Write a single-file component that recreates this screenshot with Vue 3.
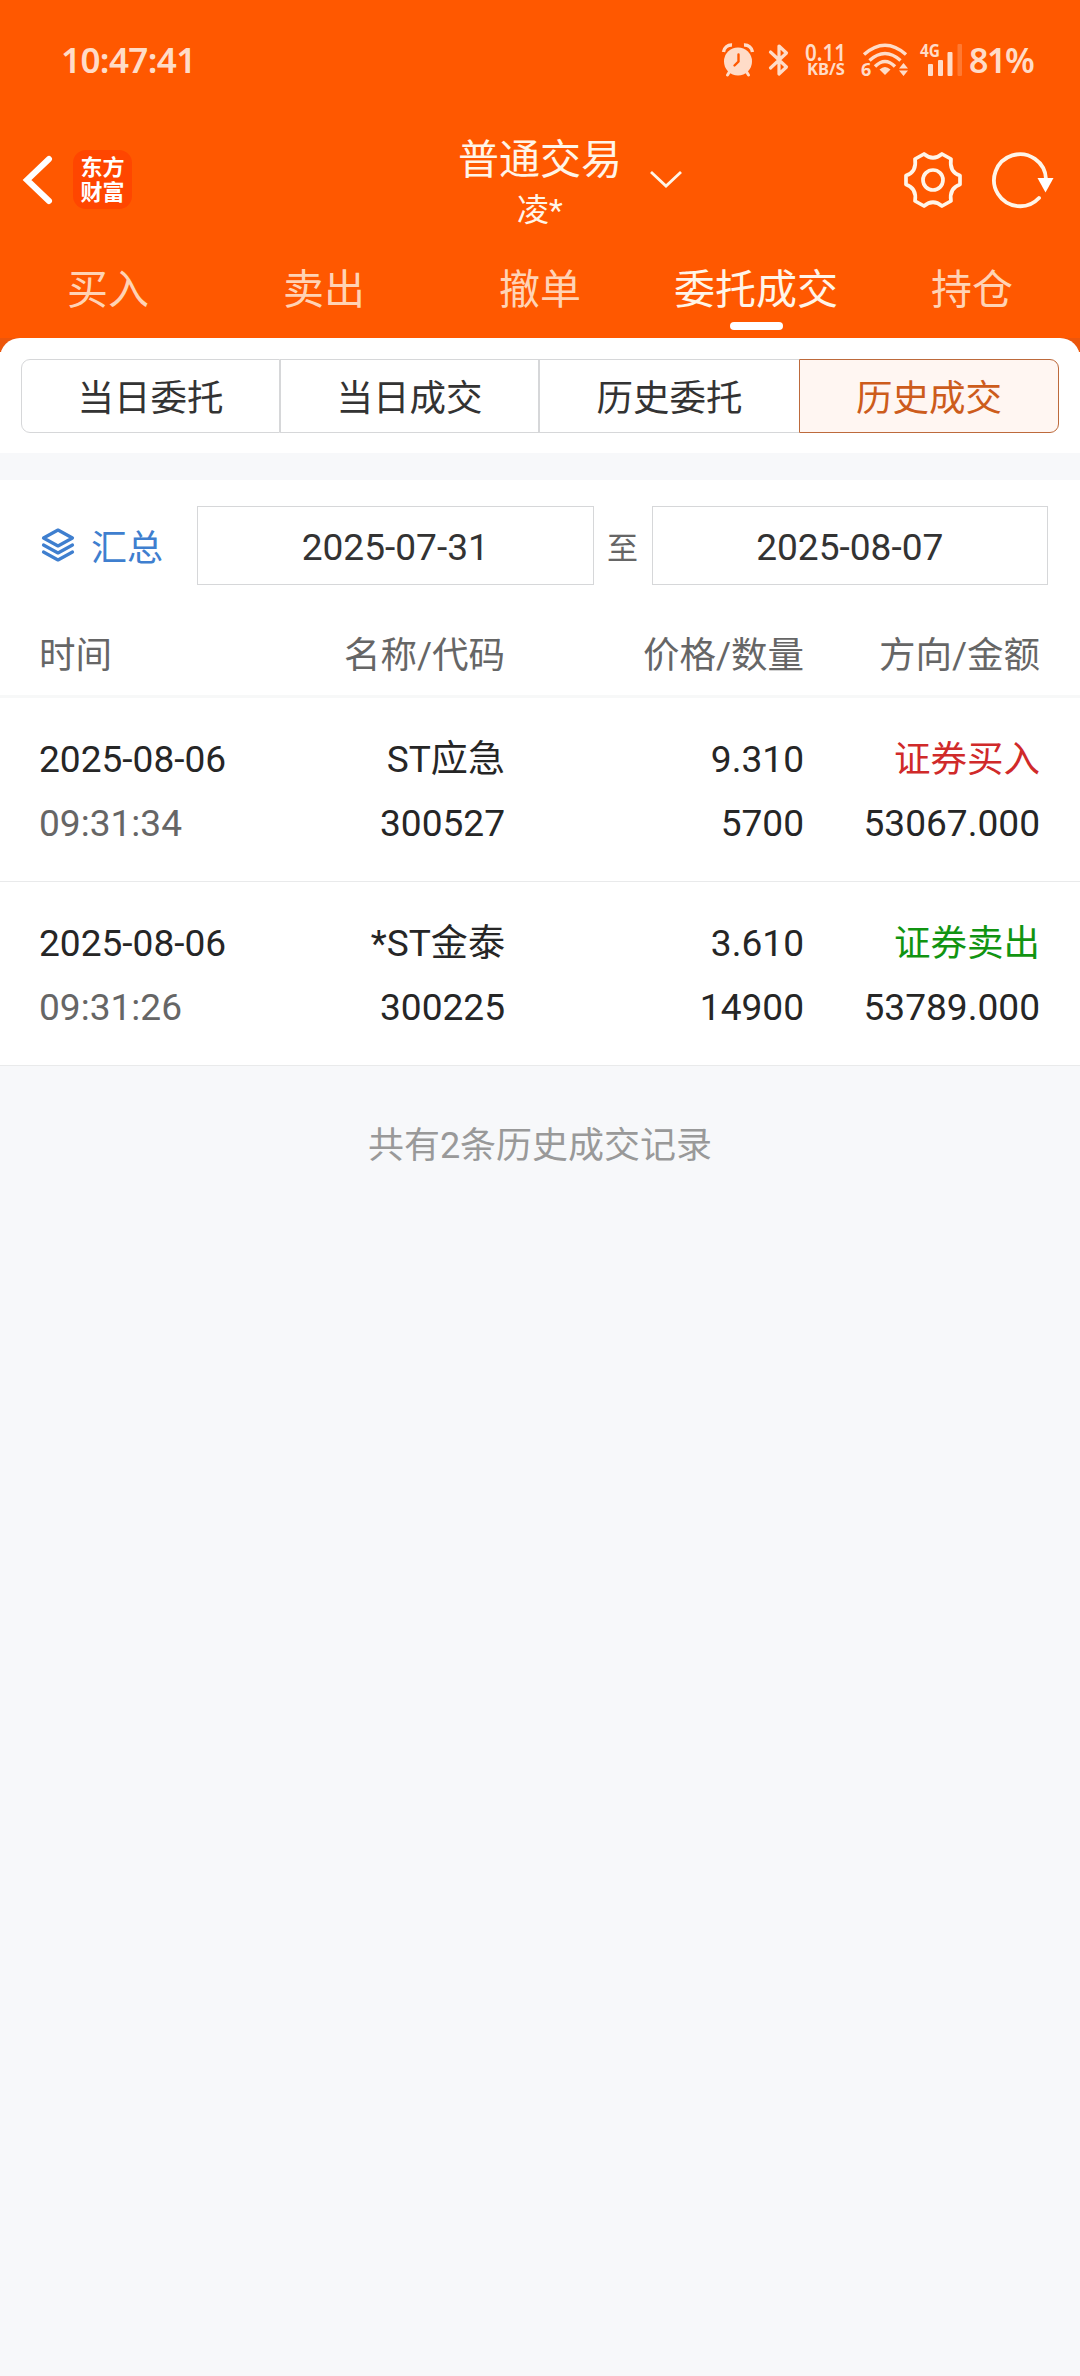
<script setup>
const tabs = ['买入', '卖出', '撤单', '委托成交', '持仓']
const activeTab = '委托成交'
const segments = ['当日委托', '当日成交', '历史委托', '历史成交']
const activeSegment = '历史成交'
const records = [
  { date: '2025-08-06', time: '09:31:34', name: 'ST应急', code: '300527', price: '9.310', qty: '5700', side: '证券买入', type: 'buy', amount: '53067.000' },
  { date: '2025-08-06', time: '09:31:26', name: '*ST金泰', code: '300225', price: '3.610', qty: '14900', side: '证券卖出', type: 'sell', amount: '53789.000' }
]
</script>

<template>
  <div class="screen">
    <header class="header">
      <div class="status">
        <span class="clock">10:47:41</span>
        <div class="status-icons">
          <svg class="alarm" width="32" height="34" viewBox="0 0 32 34">
            <path d="M1.500 9A8 8 0 0 1 10 2M30.500 9A8 8 0 0 0 22 2" fill="none" stroke="currentColor" stroke-width="3.400" />
            <path d="M8 28L5.500 32M24 28L26.500 32" stroke="currentColor" stroke-width="3" stroke-linecap="round" />
            <circle cx="16" cy="18.500" r="14" fill="currentColor" />
            <path d="M16.500 11.500V18.500L12.500 22.500" fill="none" stroke="#ff5800" stroke-width="2.400" stroke-linecap="round" />
          </svg>
          <svg class="bluetooth" width="22" height="34" viewBox="0 0 22 34">
            <path d="M2.500 9L18.500 24L11 31V3L18.500 10L2.500 25" fill="none" stroke="currentColor" stroke-width="3.200" stroke-linejoin="round" stroke-linecap="round" />
          </svg>
          <svg class="speed" width="41" height="34" viewBox="0 0 41 34" fill="currentColor">
            <text x="0" y="17.500" font-size="24" font-weight="600" textLength="41" lengthAdjust="spacingAndGlyphs">0.11</text>
            <text x="2" y="32" font-size="16" font-weight="700" textLength="38" lengthAdjust="spacingAndGlyphs">KB/S</text>
          </svg>
          <svg class="wifi" width="48" height="34" viewBox="0 0 48 34">
            <g fill="none" stroke="currentColor" stroke-width="3.400">
              <path d="M3 11.500Q24 -7 45 11.500" />
              <path d="M8.500 17.500Q24 3.500 39.500 17.500" />
              <path d="M14 23.500Q24 13.500 34 23.500" />
            </g>
            <path d="M18.500 26.500Q24 21.500 29.500 26.500L24 32Z" fill="currentColor" />
            <path d="M38 25.500L42.500 20L47 25.500ZM38 27.500H47L42.500 33Z" fill="currentColor" />
            <text x="0" y="32.500" font-size="18" font-weight="700" fill="currentColor">6</text>
          </svg>
          <svg class="signal" width="44" height="34" viewBox="0 0 44 34">
            <text x="0" y="14" font-size="18" font-weight="700" textLength="20" lengthAdjust="spacingAndGlyphs" fill="currentColor">4G</text>
            <g fill="currentColor">
              <rect x="8" y="21" width="5" height="12" rx="1" />
              <rect x="18" y="17" width="5" height="16" rx="1" />
              <rect x="27.500" y="9" width="5" height="24" rx="1" />
              <rect x="37.500" y="1" width="4.500" height="32" rx="1" opacity=".25" />
            </g>
          </svg>
          <span class="battery">81%</span>
        </div>
      </div>

      <div class="nav">
        <div class="nav-left">
          <svg width="32" height="52" viewBox="0 0 32 52">
            <path d="M28 5L6 26L28 47" fill="none" stroke="#fff" stroke-width="6" stroke-linecap="round" stroke-linejoin="miter" />
          </svg>
          <div class="logo"><span>东方</span><span>财富</span></div>
        </div>
        <div class="title">
          <div class="account">普通交易</div>
          <div class="holder">凌*</div>
        </div>
        <svg class="chevron" width="34" height="20" viewBox="0 0 34 20">
          <path d="M2 2L17 16L32 2" fill="none" stroke="#fff5e8" stroke-width="2.800" />
        </svg>
        <div class="nav-right">
          <svg width="60" height="60" viewBox="-30 -30 60 60" fill="none" stroke="#fff5e8" stroke-width="3.700" stroke-linejoin="round">
            <path d="M-9 -26Q0 -18.500 9 -26L18 -21Q16 -8 27 -4.500V4.500Q16 8 18 21L9 26Q0 18.500 -9 26L-18 21Q-16 8 -27 4.500V-4.500Q-16 -8 -18 -21Z" />
            <circle r="10" />
          </svg>
          <svg width="64" height="60" viewBox="-30 -30 64 60">
            <path d="M19 18A26 26 0 1 1 26 -1" fill="none" stroke="#fff5e8" stroke-width="3.800" stroke-linecap="round" />
            <path d="M17.500 -2H33.500L25.500 12.500Z" fill="#fff" />
          </svg>
        </div>
      </div>

      <nav class="tabs">
        <div v-for="t in tabs" :key="t" class="tab" :class="{ active: t === activeTab }">{{ t }}</div>
      </nav>
    </header>

    <div class="panel-wrap">
      <div class="panel">
        <div class="segments">
          <div v-for="s in segments" :key="s" class="segment" :class="{ active: s === activeSegment }">{{ s }}</div>
        </div>
      </div>
    </div>

    <section class="list">
      <div class="filter">
        <div class="summary">
          <svg width="34" height="34" viewBox="0 0 34 34" fill="none" stroke="#3f7fcf" stroke-width="3.200" stroke-linejoin="round" stroke-linecap="round">
            <path d="M17 2L31.500 10L17 18L2.500 10Z" />
            <path d="M2.500 17L17 25L31.500 17" />
            <path d="M2.500 24L17 32L31.500 24" />
          </svg>
          <span>汇总</span>
        </div>
        <div class="date">2025-07-31</div>
        <span class="to">至</span>
        <div class="date">2025-08-07</div>
      </div>

      <div class="grid head">
        <span>时间</span><span>名称/代码</span><span>价格/数量</span><span>方向/金额</span>
      </div>

      <div v-for="r in records" :key="r.code" class="grid row">
        <div><p>{{ r.date }}</p><p class="time">{{ r.time }}</p></div>
        <div><p>{{ r.name }}</p><p>{{ r.code }}</p></div>
        <div><p>{{ r.price }}</p><p>{{ r.qty }}</p></div>
        <div><p :class="r.type">{{ r.side }}</p><p>{{ r.amount }}</p></div>
      </div>
    </section>

    <footer class="count">共有2条历史成交记录</footer>
  </div>
</template>

<style>
body {
  margin: 0;
  background: #f7f8fa;
}
</style>

<style scoped>
.screen {
  width: 1080px;
  height: 2376px;
  overflow: hidden;
  background: #f7f8fa;
  font-family: Roboto, "Noto Sans CJK SC", sans-serif;
  font-size: 36.5px;
  color: #262626;
}
.header {
  height: 338px;
  background: #ff5800;
}
.status {
  height: 119px;
  box-sizing: border-box;
  padding: 0 46px 0 61px;
  display: flex;
  align-items: center;
  justify-content: space-between;
  color: #ffdcc8;
  font-family: "Noto Sans", sans-serif;
}
.clock {
  font-size: 35px;
  font-weight: 600;
  letter-spacing: -.6px;
}
.status-icons {
  display: flex;
  align-items: center;
}
.status-icons svg {
  display: block;
  overflow: visible;
}
.bluetooth {
  margin-left: 14px;
}
.speed,
.wifi {
  margin-left: 15px;
}
.signal {
  margin-left: 11px;
}
.battery {
  width: 65px;
  margin-left: 5px;
  font-size: 34px;
  font-weight: 600;
  letter-spacing: -1.4px;
  white-space: nowrap;
}
.nav {
  height: 121px;
  display: grid;
  grid-template-columns: 458px 164px 1fr auto;
  align-items: center;
}
.nav svg {
  display: block;
}
.nav-left {
  display: flex;
  align-items: center;
  padding-left: 21px;
  gap: 20px;
}
.logo {
  width: 59px;
  height: 59px;
  border-radius: 13px;
  background: #ff4600;
  display: flex;
  flex-direction: column;
  align-items: center;
  justify-content: center;
  color: #fff;
  font-size: 22px;
  line-height: 25px;
  font-weight: 700;
}
.title {
  text-align: center;
  color: #fff5e8;
  padding-top: 4px;
}
.account {
  font-size: 41px;
  line-height: 56px;
  white-space: nowrap;
}
.holder {
  font-size: 32px;
  line-height: 44px;
}
.chevron {
  margin-left: 27px;
}
.nav-right {
  display: flex;
  gap: 27px;
  padding-right: 26px;
}
.tabs {
  height: 98px;
  display: grid;
  grid-template-columns: repeat(5, 1fr);
}
.tab {
  display: flex;
  flex-direction: column;
  align-items: center;
  font-size: 41px;
  line-height: 60px;
  padding-top: 20px;
  color: #ffd3b5;
}
.tab.active {
  color: #fff5e8;
}
.tab.active::after {
  content: "";
  width: 53px;
  height: 8px;
  border-radius: 4px;
  background: #fff;
  margin-top: 2px;
}
.panel-wrap {
  background: linear-gradient(#ec560b 14px, #fff 14px);
}
.panel {
  height: 115px;
  box-sizing: border-box;
  padding: 21px 21px 0;
  background: #fff;
  border-radius: 20px 20px 0 0;
}
.segments {
  display: grid;
  grid-template-columns: 259px 259px 260px 260px;
  height: 74px;
}
.segment {
  display: flex;
  align-items: center;
  justify-content: center;
  padding-bottom: 2px;
  border: 1px solid #d6d7d9;
  color: #333;
  background: #fff;
}
.segment:first-child {
  border-radius: 9px 0 0 9px;
}
.segment:nth-child(3) {
  border-right: 0;
}
.segment.active {
  border-color: #bd6a3c;
  border-radius: 0 9px 9px 0;
  background: #fff6f2;
  color: #cd5c1c;
}
.list {
  margin-top: 27px;
  background: #fff;
}
.filter {
  display: flex;
  align-items: center;
  padding: 26px 32px 0 0;
}
.summary {
  width: 197px;
  box-sizing: border-box;
  padding: 0 0 2px 41px;
  display: flex;
  align-items: center;
  gap: 16px;
  color: #3f7fcf;
  font-size: 36px;
}
.date {
  flex: 1;
  height: 79px;
  box-sizing: border-box;
  padding-top: 3px;
  border: 1px solid #d6d7d9;
  display: flex;
  align-items: center;
  justify-content: center;
  font-size: 37.1px;
  color: #333;
}
.to {
  width: 58px;
  text-align: center;
  font-size: 31px;
  color: #666;
}
.grid {
  display: grid;
  grid-template-columns: 226px 240px 299px 236px;
  padding: 0 39px;
  text-align: right;
}
.grid > :first-child {
  text-align: left;
}
.head {
  height: 110px;
  line-height: 141px;
  color: #666;
  border-bottom: 3px solid #f7f8f8;
}
.row {
  height: 184px;
  box-sizing: border-box;
  padding-top: 30px;
  border-bottom: 1px solid #e9eaeb;
  font-size: 37.1px;
}
.row p {
  margin: 0;
  line-height: 64px;
}
.row .time {
  color: #666;
}
.row .buy,
.row .sell {
  font-size: 36.5px;
}
.row .buy {
  color: #d02a2a;
}
.row .sell {
  color: #119411;
}
.count {
  margin-top: 52px;
  line-height: 56px;
  text-align: center;
  font-size: 36px;
  color: #999;
}
</style>
